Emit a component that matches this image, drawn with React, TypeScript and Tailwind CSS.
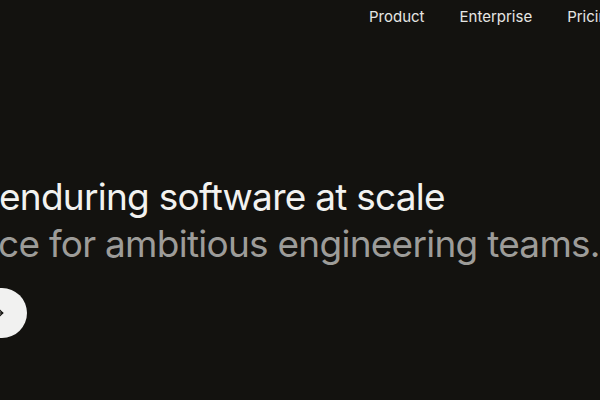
import React from "react";
import { ArrowRight } from "lucide-react";

const navItems = ["Product", "Enterprise", "Pricing"];

export default function App() {
  return (
    <div className="w-[600px] h-[400px] overflow-hidden bg-[#13120f] text-white font-['Inter','Liberation_Sans',sans-serif]">
      <nav className="flex gap-[35px] pt-[7px] pl-[369px] whitespace-nowrap">
        {navItems.map((item) => (
          <a key={item} className="text-[15px] leading-[20px] text-[#e6e6e4]">
            {item}
          </a>
        ))}
      </nav>

      <div className="flex flex-col mt-[146px] whitespace-nowrap">
        <h1 className="text-[37px] leading-[47px] tracking-[-0.02em] font-normal -ml-[1px] text-[#f2f2f0]">
          enduring software at scale
        </h1>
        <p className="text-[37px] leading-[47px] tracking-[-0.02em] -ml-[2px] text-[#9d9c99]">
          ce for ambitious engineering teams.
        </p>
        <div className="mt-[21px] -ml-[142px]">
          <button className="flex items-center gap-2 h-[50px] pl-[30px] pr-[21px] rounded-full bg-[#f1f1f0] text-[#13120f] text-[15px]">
            Start building
            <ArrowRight size={16} strokeWidth={2} />
          </button>
        </div>
      </div>
    </div>
  );
}
